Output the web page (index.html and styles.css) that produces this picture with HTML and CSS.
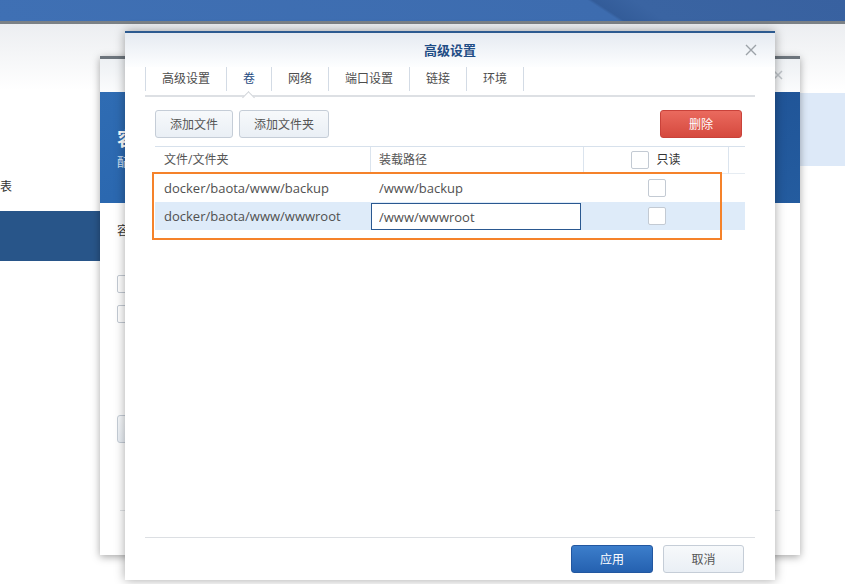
FILE: index.html
```html
<!DOCTYPE html>
<html lang="zh-CN">
<head>
    <meta charset="UTF-8">
    <title>高级设置</title>
    <link rel="stylesheet" href="styles.css">
</head>
<body>
    <div class="topbar"></div>
    <div class="page">
        <aside class="side">
            <div class="side-item">表</div>
            <div class="side-item active"></div>
        </aside>
        <main class="content">
            <div class="banner"></div>
        </main>
    </div>

    <!-- 后面的窗口（大部分被挡住） -->
    <div class="win win-back">
        <div class="win-head">
            <svg class="close" width="10" height="10" viewBox="0 0 10 10"><path d="M1 1L9 9M9 1L1 9" stroke="#bfc4c9" stroke-width="1.5"/></svg>
        </div>
        <div class="win-hero">
            <h2>容</h2>
            <p>配</p>
        </div>
        <div class="win-body">
            <div class="back-label">容</div>
            <div class="back-check"><span class="chk"></span></div>
            <div class="back-check second"><span class="chk"></span></div>
            <div class="btn back-btn"></div>
        </div>
        <div class="back-foot"></div>
    </div>

    <!-- 高级设置窗口 -->
    <div class="win win-front">
        <div class="win-head">
            高级设置
            <svg class="close" width="12" height="12" viewBox="0 0 12 12"><path d="M1 1L11 11M11 1L1 11" stroke="#9ca2a8" stroke-width="1.4"/></svg>
        </div>
        <div class="tabs">
            <div class="tab">高级设置</div>
            <div class="tab on">卷</div>
            <div class="tab">网络</div>
            <div class="tab">端口设置</div>
            <div class="tab">链接</div>
            <div class="tab">环境</div>
        </div>
        <div class="win-body">
            <div class="toolbar">
                <button class="btn">添加文件</button>
                <button class="btn">添加文件夹</button>
                <button class="btn btn-red">删除</button>
            </div>
            <div class="grid">
                <div class="th">文件/文件夹</div>
                <div class="th">装载路径</div>
                <div class="th th-ro"><span class="chk"></span>只读</div>
                <div class="th last"></div>

                <div class="td">docker/baota/www/backup</div>
                <div class="td">/www/backup</div>
                <div class="td center"><span class="chk"></span></div>
                <div class="td"></div>

                <div class="td sel">docker/baota/www/wwwroot</div>
                <div class="td sel edit"><input class="cell-input" type="text" value="/www/wwwroot"></div>
                <div class="td sel center"><span class="chk"></span></div>
                <div class="td sel"></div>
            </div>
        </div>
        <div class="win-foot">
            <button class="btn btn-blue">应用</button>
            <button class="btn btn-foot">取消</button>
        </div>
        <div class="mark"></div>
    </div>
</body>
</html>
```

FILE: styles.css
```css
body {
    margin: 0;
    width: 845px;
    height: 584px;
    overflow: hidden;
    position: relative;
    background: #fff;
    font-family: "Open Sans", "Noto Sans CJK SC", sans-serif;
    font-size: 12px;
    color: #444;
}

.topbar {
    height: 21px;
    background: linear-gradient(33deg, #3f70b4 0%, #3d6caf 70.6%, #335c99 71.2%, #3a64a2 76%, #3861a0 100%);
    border-bottom: 3px solid #7b8186;
}

.page {
    display: flex;
    height: 560px;
    background: linear-gradient(#eceef1, #fff 66px);
}
.side {
    width: 100px;
    padding-top: 150px;
}
.side-item {
    height: 25px;
    line-height: 25px;
    color: #333;
}
.side-item.active {
    margin-top: 12px;
    height: 50px;
    background: #285589;
}
.content {
    flex: 1;
    padding-top: 69px;
}
.banner {
    height: 73px;
    background: #dde9f8;
}

/* 窗口 */
.win {
    position: absolute;
    box-sizing: border-box;
    display: flex;
    flex-direction: column;
    background: #fff;
}
.win-head {
    position: relative;
    flex: none;
}
.close {
    position: absolute;
    display: block;
}

.win-back {
    left: 100px;
    top: 56px;
    width: 700px;
    height: 499px;
    border-top: 3px solid #6c747c;
    box-shadow: 0 2px 8px rgba(0, 0, 0, .35);
}
.win-back .win-head {
    height: 33px;
    background: linear-gradient(#edf0f3, #fbfcfd);
}
.win-back .close {
    right: 17px;
    top: 11px;
}
.win-hero {
    flex: none;
    height: 111px;
    box-sizing: border-box;
    padding: 37px 0 0 17px;
    color: #fff;
    background: linear-gradient(150deg, #2f6cb3 0%, #2562ab 55%, #1d4f92 56%, #245c9f 100%);
}
.win-hero h2 {
    margin: 0;
    font-size: 19px;
    line-height: 20px;
}
.win-hero p {
    margin: 4px 0 0;
    color: #d3e2f4;
    font-size: 12px;
}
.win-back .win-body {
    flex: 1;
    padding: 20px 16px 0 17px;
}
.back-label {
    line-height: 16px;
    color: #333;
}
.back-check {
    margin-top: 36px;
    height: 18px;
}
.back-check.second {
    margin-top: 12px;
}
.back-btn {
    margin-top: 92px;
    width: 80px;
    box-sizing: border-box;
}
.back-foot {
    margin: 0 20px;
    height: 44px;
    border-top: 1px solid #e0e3e6;
}

.win-front {
    left: 125px;
    top: 31px;
    width: 650px;
    height: 549px;
    border-top: 2px solid #2c5a90;
    box-shadow: 0 0 10px rgba(0, 0, 0, .35);
}
.win-front .win-head {
    height: 34px;
    line-height: 34px;
    text-align: center;
    font-size: 13px;
    font-weight: bold;
    color: #1f4d86;
    background: linear-gradient(#e5eaf1, #fdfeff);
}
.win-front .close {
    right: 18px;
    top: 11px;
}

.tabs {
    flex: none;
    display: flex;
    height: 28px;
    margin: 0 20px;
    border-bottom: 2px solid #dde0e4;
}
.tab {
    position: relative;
    height: 24px;
    line-height: 24px;
    padding: 0 16px;
    border-left: 1px solid #d3dbe5;
    color: #4d4d4d;
}
.tab:last-child {
    border-right: 1px solid #d3dbe5;
}
.tab.on {
    color: #1e4a80;
}
.tab.on::after {
    content: "";
    position: absolute;
    left: 50%;
    top: 26px;
    width: 8px;
    height: 8px;
    margin-left: -5px;
    background: #fff;
    border-top: 1px solid #cfd3d8;
    border-left: 1px solid #cfd3d8;
    transform: rotate(45deg);
}

.win-front .win-body {
    flex: 1;
    padding: 13px 20px 0;
}
.toolbar {
    display: flex;
    gap: 6px;
    margin: 0 13px 0 10px;
}
.btn {
    height: 28px;
    padding: 0 14px;
    border: 1px solid #c5cdd7;
    border-radius: 3px;
    background: linear-gradient(#f7f9fb, #eaeff5);
    color: #555;
    font-family: inherit;
    font-size: 12px;
}
.btn-red {
    margin-left: auto;
    width: 82px;
    border-color: #c9423a;
    background: linear-gradient(#ea6a5e, #d5493e);
    color: #fff;
}

.grid {
    display: grid;
    grid-template-columns: 216px 213px 145px 1fr;
    margin: 8px 10px 0;
    border-top: 1px solid #d7e1ec;
}
.th {
    height: 26px;
    line-height: 26px;
    padding-left: 8px;
    border-right: 1px solid #dbe4ee;
    border-bottom: 1px solid #e6ecf2;
    color: #555;
}
.th:first-child,
.td:nth-child(4n+1) {
    padding-left: 9px;
}
.th.last {
    border-right: none;
}
.th-ro {
    display: flex;
    align-items: center;
    justify-content: center;
    gap: 7px;
    padding-left: 0;
    color: #333;
}
.td {
    height: 28px;
    line-height: 28px;
    padding-left: 8px;
    color: #505050;
    font-size: 13px;
}
.td.sel {
    background: #deebf9;
}
.td.center {
    display: flex;
    align-items: center;
    justify-content: center;
    padding-left: 0;
}
.td.edit {
    padding-left: 0;
}
.cell-input {
    display: block;
    box-sizing: border-box;
    width: 210px;
    height: 27px;
    margin-top: 1px;
    padding: 0 0 0 7px;
    border: 1px solid #2a5890;
    background: #fff;
    color: #505050;
    font-family: inherit;
    font-size: 13px;
    outline: none;
}
.chk {
    display: inline-block;
    box-sizing: border-box;
    width: 18px;
    height: 18px;
    border: 1px solid #c3cad3;
    border-radius: 2px;
    background: #fff;
}

.win-foot {
    flex: none;
    display: flex;
    justify-content: flex-end;
    gap: 10px;
    height: 43px;
    margin: 0 20px;
    padding: 7px 11px 0 0;
    box-sizing: border-box;
    border-top: 1px solid #dcdfe3;
}
.btn-blue {
    width: 82px;
    border-color: #2257a0;
    background: linear-gradient(#3c7ecb, #2561b0);
    color: #fff;
}
.btn-foot {
    width: 81px;
}

/* 标注框 */
.mark {
    position: absolute;
    left: 27px;
    top: 139px;
    width: 570px;
    height: 68px;
    box-sizing: border-box;
    border: 2px solid #f5822a;
}
```
